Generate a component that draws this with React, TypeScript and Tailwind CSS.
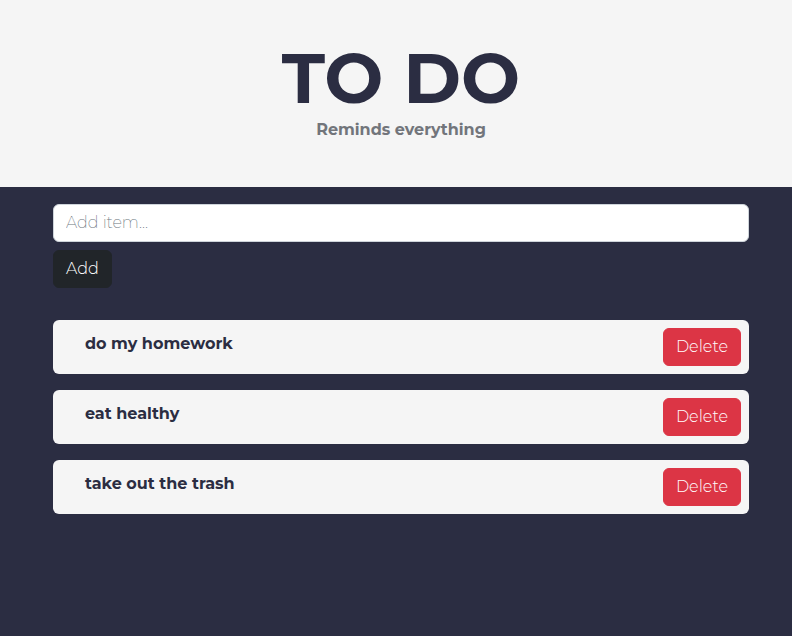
import { useState } from "react";
import type { FormEvent } from "react";

const initialItems = ["do my homework", "eat healthy", "take out the trash"];

export default function App() {
  const [items, setItems] = useState(initialItems);
  const [draft, setDraft] = useState("");

  function addItem(event: FormEvent) {
    event.preventDefault();
    const text = draft.trim();
    if (!text) return;
    setItems([...items, text]);
    setDraft("");
  }

  return (
    <div className="min-h-screen bg-[#2b2d42] font-['Montserrat','Inter','Liberation_Sans',sans-serif] text-base text-[#2b2d42]">
      <header className="bg-[#f5f5f5] pt-[38px] pb-[45px] pl-[10px] text-center">
        <h1 className="text-[70px] leading-[80px] font-bold">TO DO</h1>
        <p className="leading-6 font-bold text-[#72757b]">Reminds everything</p>
      </header>
      <main className="pt-[17px] pr-[43px] pl-[53px]">
        <form onSubmit={addItem}>
          <input
            type="text"
            aria-label="Add item"
            placeholder="Add item..."
            value={draft}
            onChange={(event) => setDraft(event.target.value)}
            className="block h-[38px] w-full rounded-md border border-[#ced4da] bg-white px-3 pb-0.5 font-extralight placeholder:text-[#6c757d]"
          />
          <button type="submit" className="mt-2 h-[38px] rounded-md border border-[#212529] bg-[#212529] px-3 font-light text-white">
            Add
          </button>
        </form>
        <ul className="mt-8 flex flex-col gap-4">
          {items.map((item, index) => (
            <li key={index} className="flex items-start justify-between rounded-md bg-[#f5f5f5] p-2">
              <p className="pl-6 leading-8 font-bold">{item}</p>
              <button
                type="button"
                onClick={() => setItems(items.filter((_, i) => i !== index))}
                className="h-[38px] rounded-md border border-[#dc3545] bg-[#dc3545] px-3 font-light text-white"
              >
                Delete
              </button>
            </li>
          ))}
        </ul>
      </main>
    </div>
  );
}
